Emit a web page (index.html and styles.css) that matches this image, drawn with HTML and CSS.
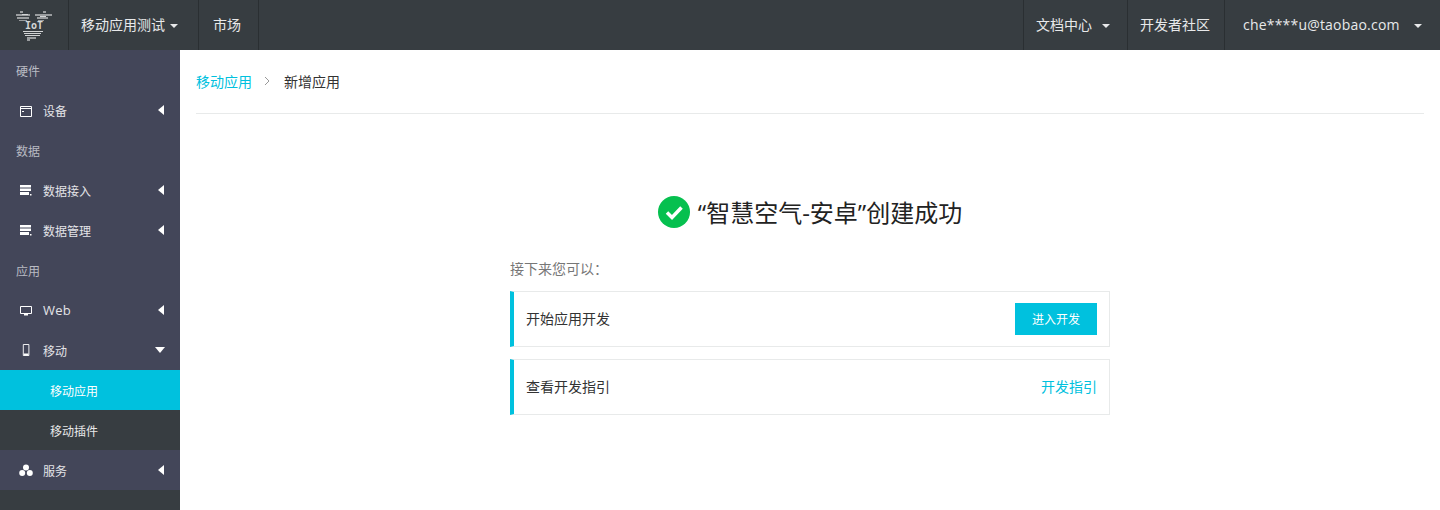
FILE: index.html
```html
<!DOCTYPE html>
<html lang="zh-CN">
<head>
<meta charset="utf-8">
<title>新增应用</title>
<link rel="stylesheet" href="styles.css">
</head>
<body>
<header class="topbar">
  <div class="logo-cell">
    <svg class="logo" width="36" height="30" viewBox="0 0 36 30">
      <g fill="#9a9d9f">
        <rect x="4" y="0" width="3" height="2"/><rect x="27" y="0" width="3" height="2"/>
        <rect x="0" y="3" width="14" height="2"/><rect x="19" y="3" width="17" height="2"/>
        <rect x="1" y="6" width="12" height="2"/><rect x="21" y="6" width="11" height="2"/>
        <rect x="3" y="9" width="8" height="1"/><rect x="22" y="9" width="6" height="1"/>
      </g>
      <g fill="#d2d4d5">
        <rect x="6" y="3" width="6" height="1"/><rect x="24" y="5" width="6" height="1"/>
        <rect x="7" y="20" width="20" height="1"/>
        <rect x="8" y="22" width="17" height="1"/>
        <rect x="9" y="24" width="15" height="1"/>
      </g>
      <g fill="#9a9d9f">
        <rect x="11" y="26" width="9" height="2"/>
        <rect x="11" y="28" width="3" height="2"/>
      </g>
      <text class="logo-text" x="18" y="18" text-anchor="middle">IoT</text>
    </svg>
  </div>
  <div class="top-cell project"><span class="top-text">移动应用测试</span><span class="caret caret-lg"></span></div>
  <div class="top-cell market"><span class="top-text">市场</span></div>
  <div class="top-spacer"></div>
  <div class="top-cell docs"><span class="top-text">文档中心</span><span class="caret"></span></div>
  <div class="top-cell community"><span class="top-text">开发者社区</span></div>
  <div class="top-cell user"><span class="top-text email">che****u@taobao.com</span><span class="caret"></span></div>
</header>
<div class="body-row">
  <nav class="sidebar">
    <div class="nav-title">硬件</div>
    <div class="nav-item">
      <svg class="nav-icon" width="14" height="14" viewBox="0 0 14 14"><path d="M1.500 2.500h11v10h-11zM1.500 4.500h11" fill="none" stroke="#fff"/><path d="M3 7h2v1H3z" fill="#fff"/></svg>
      <span class="nav-label">设备</span><span class="arrow-left"></span>
    </div>
    <div class="nav-title">数据</div>
    <div class="nav-item">
      <svg class="nav-icon" width="14" height="14" viewBox="0 0 14 14"><path d="M1 1h11v2.500H1zM1 4.500h11V7H1zM1 8h9v3H1zM11 10h1.500v1.500H11z" fill="#fff"/></svg>
      <span class="nav-label">数据接入</span><span class="arrow-left"></span>
    </div>
    <div class="nav-item">
      <svg class="nav-icon" width="14" height="14" viewBox="0 0 14 14"><path d="M1 1h11v2.500H1zM1 4.500h11V7H1zM1 8h9v3H1zM11 10h1.500v1.500H11z" fill="#fff"/></svg>
      <span class="nav-label">数据管理</span><span class="arrow-left"></span>
    </div>
    <div class="nav-title">应用</div>
    <div class="nav-item">
      <svg class="nav-icon" width="14" height="14" viewBox="0 0 14 14"><path d="M1.500 2.500h11v7h-11z" fill="none" stroke="#fff"/><path d="M5 10h4v1.500H5z" fill="#fff"/></svg>
      <span class="nav-label web">Web</span><span class="arrow-left"></span>
    </div>
    <div class="nav-item">
      <svg class="nav-icon" width="14" height="14" viewBox="0 0 14 14"><path d="M3.500 1.500h7v11h-7z" fill="none" stroke="#fff" transform="translate(1.500 -1) scale(.8 1)"/><path d="M4 10.500h6v2H4z" fill="#fff" transform="translate(1.500 -1) scale(.8 1)"/></svg>
      <span class="nav-label">移动</span><span class="arrow-down"></span>
    </div>
    <div class="nav-sub active">移动应用</div>
    <div class="nav-sub">移动插件</div>
    <div class="nav-item">
      <svg class="nav-icon" width="14" height="14" viewBox="0 0 14 14"><circle cx="7" cy="3.500" r="3" fill="#fff"/><circle cx="3.200" cy="9" r="3" fill="#fff"/><circle cx="10.800" cy="9" r="3" fill="#fff"/></svg>
      <span class="nav-label">服务</span><span class="arrow-left"></span>
    </div>
  </nav>
  <main class="content">
    <div class="breadcrumb">
      <a class="crumb-link">移动应用</a>
      <svg class="crumb-sep" width="7" height="10" viewBox="0 0 7 10"><path d="M1 1l4 4-4 4" fill="none" stroke="#999"/></svg>
      <span class="crumb-current">新增应用</span>
    </div>
    <section class="result">
      <h1 class="result-title">
        <svg class="check" width="32" height="32" viewBox="0 0 32 32"><circle cx="16" cy="16" r="16" fill="#06c04f"/><path d="M9 16.500l5 5 9.500-10" fill="none" stroke="#fff" stroke-width="3.500"/></svg>
        <span class="result-text">“智慧空气-安卓”创建成功</span>
      </h1>
      <div class="steps">
        <p class="next">接下来您可以：</p>
        <div class="step">
          <span class="step-text">开始应用开发</span>
          <a class="btn">进入开发</a>
        </div>
        <div class="step">
          <span class="step-text">查看开发指引</span>
          <a class="step-text step-link">开发指引</a>
        </div>
      </div>
    </section>
  </main>
</div>
</body>
</html>
```
FILE: styles.css
```css
* { box-sizing: border-box; }
html, body { margin: 0; height: 100%; }
body {
  width: 1440px;
  height: 510px;
  overflow: hidden;
  background: #fff;
  font-family: "Open Sans", "Noto Sans CJK SC", sans-serif;
  font-size: 14px;
  color: #333;
}
.topbar {
  display: flex;
  height: 50px;
  background: #373d41;
  color: #e8e9ea;
}
.logo-cell {
  width: 69px;
  display: flex;
  align-items: center;
  padding-left: 16px;
  border-right: 1px solid #2a2f32;
}
.logo { display: block; margin-top: 2px; }
.logo-text { font: 700 10px "DejaVu Sans Mono", monospace; fill: #d5d7d8; }
.top-cell {
  display: flex;
  align-items: center;
  height: 50px;
  border-right: 1px solid #2a2f32;
  white-space: nowrap;
}
.top-text { padding-bottom: 2px; }
.project { width: 130px; padding-left: 12px; }
.market { width: 60px; padding-left: 14px; }
.top-spacer { flex: 1; border-right: 1px solid #2a2f32; }
.docs { width: 104px; padding-left: 12px; }
.community { width: 97px; padding-left: 12px; }
.user { width: 215px; padding-left: 18px; border-right: 0; }
.email { letter-spacing: 0.2px; width: 171px; }
.caret {
  width: 0;
  height: 0;
  margin: 1px 0 0 10px;
  border-left: 4px solid transparent;
  border-right: 4px solid transparent;
  border-top: 4px solid #e8e9ea;
}
.caret-lg { margin-left: 5px; }
.user .caret { margin-left: 0; }
.body-row { display: flex; height: 460px; }
.sidebar {
  width: 180px;
  flex: none;
  background: #373d41;
  display: flex;
  flex-direction: column;
  font-size: 12px;
}
.nav-title {
  height: 40px;
  line-height: 44px;
  padding-left: 16px;
  background: #434659;
  color: #b9bbc3;
}
.nav-item {
  display: flex;
  align-items: center;
  height: 40px;
  padding: 2px 0 0 19px;
  background: #434659;
  color: #e4e4e8;
}
.nav-icon { flex: none; display: block; margin-right: 10px; }
.nav-label { flex: 1; }
.nav-label.web { font-size: 13px; letter-spacing: 0.2px; margin-top: -2px; }
.arrow-left {
  width: 0;
  height: 0;
  margin: -3px 16px 0 0;
  border-top: 5px solid transparent;
  border-bottom: 5px solid transparent;
  border-right: 6px solid #fff;
}
.arrow-down {
  width: 0;
  height: 0;
  margin: -3px 15px 0 0;
  border-left: 5px solid transparent;
  border-right: 5px solid transparent;
  border-top: 6px solid #fff;
}
.nav-sub {
  height: 40px;
  line-height: 44px;
  padding-left: 50px;
  color: #e8e9ea;
}
.nav-sub.active { background: #00c1de; color: #fff; }
.content { flex: 1; padding: 0 16px; min-width: 0; }
.breadcrumb {
  display: flex;
  align-items: center;
  height: 64px;
  padding-bottom: 2px;
  border-bottom: 1px solid #e8eaea;
}
.crumb-link { color: #00c1de; }
.crumb-sep { margin: 0 13px 0 12px; }
.crumb-current { color: #333; }
.result { width: 600px; margin-left: 314px; }
.result-title {
  display: flex;
  align-items: center;
  justify-content: center;
  height: 32px;
  margin: 82px 0 0;
  font-size: 24px;
  font-weight: 400;
  color: #222;
}
.result-text { padding-bottom: 2px; }
.check { margin-right: 8px; flex: none; }
.steps { margin-top: 32px; }
.next {
  margin: 0 0 14px;
  height: 17px;
  line-height: 17px;
  color: #777;
}
.step {
  display: flex;
  align-items: center;
  justify-content: space-between;
  height: 56px;
  margin-bottom: 12px;
  padding: 0 12px;
  border: 1px solid #e8eaea;
  border-left: 4px solid #00c1de;
}
.step-text { color: #333; margin-top: -2px; }
.btn {
  width: 82px;
  height: 32px;
  line-height: 34px;
  text-align: center;
  background: #00c1de;
  color: #fff;
  font-size: 12px;
}
.step-link { color: #00c1de; }
```
